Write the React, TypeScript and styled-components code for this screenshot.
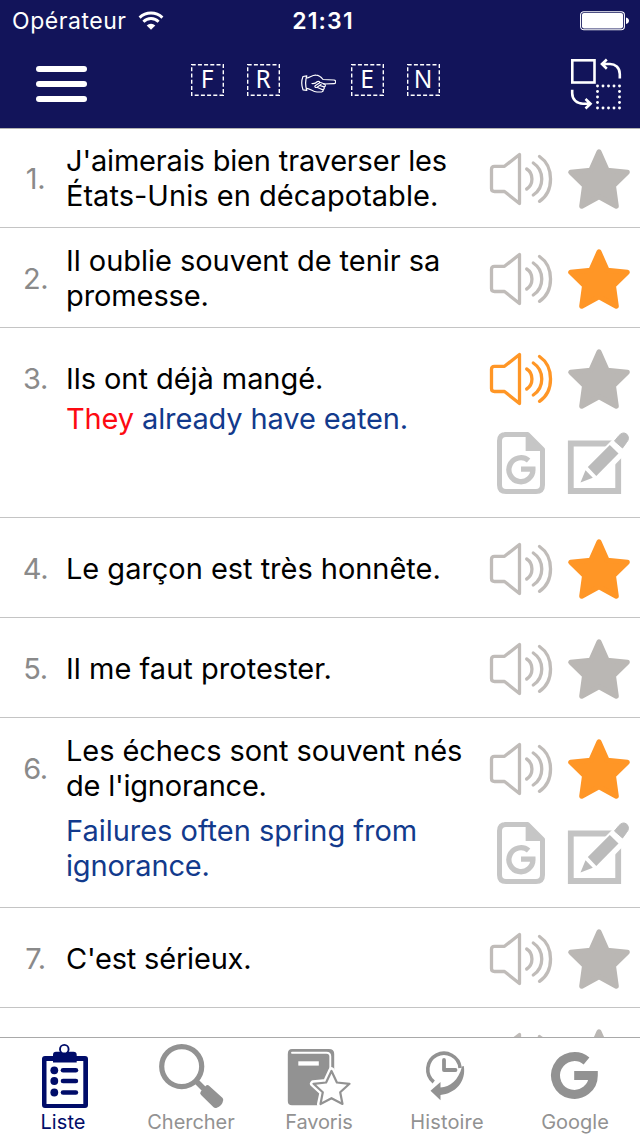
import React from "react";
import styled, { createGlobalStyle } from "styled-components";

const NAVY = "#12145a";
const ORANGE = "#ff9626";
const MUTED = "#c0bcb9";

const GlobalStyle = createGlobalStyle`
  * { box-sizing: border-box; }
  body { margin: 0; background: #fff; font-family: Inter, "Liberation Sans", sans-serif; }
  svg { display: block; flex: none; }
`;

const Screen = styled.div`
  width: 640px;
  height: 1136px;
  display: flex;
  flex-direction: column;
  overflow: hidden;
  background: #fff;
`;

const Header = styled.header`
  flex: none;
  height: 129px;
  background: ${NAVY};
  color: #fff;
  border-bottom: 1px solid #b2b2b2;
`;

const StatusBar = styled.div`
  height: 40px;
  display: grid;
  grid-template-columns: 1fr auto 1fr;
  align-items: center;
  padding: 1px 10px 0 12px;
  font-size: 23px;
  line-height: 40px;
`;

const Carrier = styled.div`
  display: flex;
  align-items: center;
  gap: 11px;
  letter-spacing: 0.55px;
`;

const Clock = styled.div`
  font-weight: 600;
  font-size: 23px;
  letter-spacing: 1.2px;
  padding-left: 4px;
`;

const StatusRight = styled.div`
  display: flex;
  justify-content: flex-end;
`;

const NavBar = styled.div`
  height: 88px;
  display: flex;
  align-items: flex-start;
  padding: 17px 18px 0 35px;
`;

const MenuButton = styled.div`
  width: 53px;
  padding: 9px 1px 0;
  display: flex;
  flex-direction: column;
  gap: 9px;
`;

const MenuBar = styled.span`
  height: 6px;
  border-radius: 3px;
  background: #fff;
`;

const Direction = styled.div`
  display: flex;
  margin: 7px auto 0 102.5px;
  gap: 23px;
`;

const Letter = styled.span`
  position: relative;
  width: 33px;
  height: 32px;
  font-family: "Noto Sans", sans-serif;
  font-size: 24.5px;
  line-height: 30px;
  text-align: center;
`;

const Dashes = styled.svg`
  position: absolute;
  inset: 0;
`;

const HandSlot = styled.span`
  width: 35px;
  margin: 0 -8px 0 -2px;
`;

const List = styled.main`
  flex: 1;
  min-height: 0;
  overflow: hidden;
  margin-top: -1px;
`;

const Row = styled.article<{ $open?: boolean }>`
  display: flex;
  height: ${(p) => (p.$open ? 190 : 100)}px;
  border-bottom: 1px solid #c4c4c4;
`;

const Index = styled.div`
  flex: none;
  width: 66px;
  padding-left: 5px;
  height: 101px;
  line-height: 101px;
  text-align: center;
  font-size: 29px;
  font-weight: 400;
  letter-spacing: -0.4px;
  color: #8a8a8a;
`;

const Body = styled.div`
  flex: 1;
  font-size: 29px;
  line-height: 35px;
  white-space: nowrap;
`;

const Phrase = styled.div<{ $lines: number }>`
  padding-top: ${(p) => (p.$lines === 2 ? 15 : 33)}px;
  color: #000;
`;

const Translation = styled.div<{ $gap: number }>`
  padding-top: ${(p) => p.$gap}px;
  color: #123a8c;
`;

const Line = styled.div<{ $track?: number }>`
  letter-spacing: ${(p) => p.$track ?? -0.06}px;
`;

const Wrong = styled.span`
  color: #fd0a12;
`;

const Actions = styled.div`
  flex: none;
  width: 154px;
  padding-top: 20px;
  display: grid;
  grid-template-columns: 78px 76px;
  grid-auto-rows: 64px;
  row-gap: 18px;
`;

const TabBar = styled.nav`
  flex: none;
  height: 99px;
  display: grid;
  grid-template-columns: repeat(5, 128px);
  border-top: 1px solid #a9a9a9;
  background: #fff;
`;

const Tab = styled.div<{ $active?: boolean }>`
  color: ${(p) => (p.$active ? "#000c69" : "#929292")};
  display: flex;
  flex-direction: column;
  align-items: center;
`;

const TabLabel = styled.span<{ $track: number; $shift: number }>`
  font-size: 20px;
  line-height: 24px;
  letter-spacing: ${(p) => p.$track}px;
  margin-left: ${(p) => p.$shift}px;
`;

const WifiIcon = () => (
  <svg width="26" height="20" viewBox="0 0 26 20" fill="none" stroke="#fff" strokeWidth="2.9">
    <path d="M1.6 6.6A16.4 16.4 0 0 1 24.4 6.6" />
    <path d="M5.4 10.7A10.8 10.8 0 0 1 20.6 10.7" />
    <path d="M13 18.8L8.7 14.4A6.1 6.1 0 0 1 17.3 14.4Z" fill="#fff" stroke="none" />
  </svg>
);

const BatteryIcon = () => (
  <svg width="50" height="20" viewBox="0 0 50 20">
    <rect x="0.6" y="0.7" width="43.8" height="18" rx="3.2" fill="none" stroke="#fff" strokeWidth="1.1" />
    <rect x="2" y="2" width="41" height="15.4" rx="1.8" fill="#fff" />
    <path d="M46 6.4c2 .6 3 1.8 3 3.3s-1 2.700-3 3.300z" fill="#fff" />
  </svg>
);

const HandIcon = () => (
  <svg width="35" height="32" viewBox="0 0 35 32" fill="none" stroke="#fff" strokeWidth="1.200" strokeLinejoin="round" strokeLinecap="round">
    <path d="M2 12.500C.6 16 .6 22 2 25.800L5.800 26.400C4.400 22 4.400 16 5.800 11.800Z" />
    <path d="M5.800 14C9 13.500 11 11 15 11.200C18 11.200 20 13 22 15.500L33 16C35.300 16.300 35.300 19.600 33 19.700L22.500 20" />
    <path d="M5.600 24.300C9 24.300 11.500 27.500 16 28L20.500 28C23 27.500 22.500 25.500 21 25.300" />
    <path d="M11 19.500C13.500 19.800 15.500 18.500 16.500 17.500C18 17 19.500 17.800 18 19.200L14.500 21.500C13 22.800 14.500 24 16 23.200L20 20.500" />
    <path d="M19.500 18.500L23.500 20C25.200 21 24.200 23.200 22.500 22.700L18.500 21.500M16.500 23.500L20.500 25.300C22.700 26.300 24.300 23.800 22.500 22.800" />
  </svg>
);

const SwapIcon = () => {
  const dots: [number, number][] = [];
  for (let i = 0; i < 5; i++) {
    for (let j = 0; j < 5; j++) {
      if (i === 0 || i === 4 || j === 0 || j === 4) dots.push([29.5 + i * 5.5, 29 + j * 5.5]);
    }
  }
  return (
    <svg width="54" height="54" viewBox="0 0 54 54" fill="none" stroke="#fff" strokeWidth="2.6">
      <rect x="4.300" y="3.300" width="22.200" height="22.200" />
      <path d="M51.800 21.500V17C51.800 10.500 47 7 42 7H33.500M38.800 2.500L34 7L38.800 11.700" />
      <path d="M4.200 32.700V36.200C4.200 42.700 9 46.700 15 46.700H22.500M17.500 42L22.500 46.700L17.500 51.500" />
      <g fill="#fff" stroke="none">
        {dots.map(([x, y]) => <circle key={`${x}-${y}`} cx={x} cy={y} r="1.450" />)}
      </g>
    </svg>
  );
};

const SpeakerIcon = ({ color = MUTED }: { color?: string }) => (
  <svg width="78" height="64" viewBox="0 0 78 64" fill="none" stroke={color} strokeWidth="3.300" strokeLinecap="round" strokeLinejoin="round">
    <path d="M8.500 18.300H18.500L33.500 6.500V55.500L18.500 43.500H8.500Q5.500 43.500 5.500 40.500V21.300Q5.500 18.300 8.500 18.300Z" />
    <path d="M40.700 21C47.700 25.500 47.700 36.500 40.700 41" />
    <path d="M47.300 15C58.600 22.500 58.600 39.500 47.300 47" />
    <path d="M53.500 8.500C68.200 18.500 68.200 43.500 53.500 53.300" />
  </svg>
);

const StarIcon = ({ color = "#bab7b4" }: { color?: string }) => (
  <svg width="76" height="64" viewBox="0 0 76 64" fill={color} stroke={color} strokeWidth="5" strokeLinejoin="round">
    <path d="M35 3.800L43.200 22.300L63.300 24.300L49.500 37.800L52.300 58.200L35 48.700L17.700 58.200L20.500 37.800L6.700 24.300L26.800 22.300Z" />
  </svg>
);

const GoogleDocIcon = () => (
  <svg width="78" height="64" viewBox="0 0 78 64" fill="none" stroke="#c6c6c6">
    <path d="M19 4.500H41.500L56.500 19.500V55Q56.500 61.500 50 61.500H20Q13.500 61.500 13.500 55V11Q13.500 4.500 20 4.500Z" strokeWidth="5" strokeLinejoin="round" />
    <path d="M39.600 4L57 21H39.600Z" fill="#c6c6c6" stroke="none" />
    <path d="M42.600 30.500A12 12 0 1 0 46.900 39.200H35" strokeWidth="5.300" />
  </svg>
);

const EditIcon = () => (
  <svg width="76" height="64" viewBox="0 0 76 64">
    <path d="M6.800 13.500H54.200V61H6.800Z" fill="none" stroke="#c3c3c3" strokeWidth="5.800" />
    <path d="M13 51L31 27L57 1L71 14L41 45Z" fill="#fff" />
    <path d="M16.500 52.500L21.500 40.200L28.800 47.800Z" fill="#bbb" />
    <path d="M23.800 37L45.800 15L54.500 23.500L32.300 46Z" fill="#bbb" />
    <path d="M50.5 11L55 5.500Q59 1.200 62.800 4.200Q66.300 8.200 62.500 12.500L58.500 18Z" fill="#bbb" stroke="#bbb" strokeLinejoin="round" />
  </svg>
);

const ListIcon = () => (
  <svg width="128" height="72" viewBox="0 0 128 72" fill="currentColor">
    <path fillRule="evenodd" d="M45 18H85Q88 18 88 21V67Q88 70 85 70H45Q42 70 42 67V21Q42 18 45 18ZM46.500 23V66H83.300V23Z" />
    <path d="M53 24.500V17Q53 13.800 56 13.800H73.500Q76.700 13.800 76.700 17V24.500Z" />
    <circle cx="64.300" cy="11.200" r="4.300" fill="#fff" stroke="currentColor" strokeWidth="1.900" />
    {[32.300, 43, 54.500].map((y) => (
      <g key={y}>
        <circle cx="54.300" cy={y} r="3.900" />
        <rect x="60.700" y={y - 2.300} width="17.500" height="4.600" rx="2.300" />
      </g>
    ))}
  </svg>
);

const SearchIcon = () => (
  <svg width="128" height="72" viewBox="0 0 128 72" fill="none" stroke="currentColor">
    <circle cx="53.700" cy="28.600" r="20" strokeWidth="5.200" />
    <path d="M67.500 42.500L76 51" strokeWidth="5.500" />
    <path d="M79.500 50L92.500 61.800Q91.800 66 87.500 67.300L75 55Z" fill="currentColor" strokeWidth="5.500" strokeLinejoin="round" />
  </svg>
);

const FavoritesIcon = () => (
  <svg width="128" height="72" viewBox="0 0 128 72">
    <path fill="currentColor" d="M36 11H73Q78.200 11 78.200 16V44L64 67.300H36Q31.800 67.300 31.800 63V16Q31.800 11 36 11Z" />
    <path d="M36 14.700H70.500Q74.300 14.700 74.300 18.500V45" fill="none" stroke="#fff" strokeWidth="1.900" strokeLinecap="round" />
    <rect x="42.300" y="23.300" width="20.500" height="4.300" fill="#fff" />
    <path
      d="M75.500 32.500L80.900 44.300L93.800 45.600L84.200 54.300L86.800 66.300L75.500 60.200L64.200 66.300L66.800 54.300L57.200 45.600L70.100 44.300Z"
      fill="#fff" stroke="#fff" strokeWidth="6.500" strokeLinejoin="round"
    />
    <path
      d="M75.500 33L80.900 44.500L93.500 45.800L84.200 54.300L86.500 66L75.500 60.200L64.500 66L66.800 54.300L57.500 45.800L70.100 44.500Z"
      fill="#fff" stroke="currentColor" strokeWidth="2.200" strokeLinejoin="round"
    />
  </svg>
);

const HistoryIcon = () => (
  <svg width="128" height="72" viewBox="0 0 128 72" fill="none" stroke="currentColor">
    <path d="M49.700 44A16.200 16.200 0 1 1 76.100 30" strokeWidth="3.600" />
    <path d="M60 22V32H71.500" strokeWidth="3.800" strokeLinecap="round" strokeLinejoin="round" />
    <path d="M79.800 28C82.500 44 71 55.500 56.500 57V62.300L46.500 52.800L56.500 44V49.500C66 49 74.500 42.500 78 28.500Z" fill="currentColor" stroke="none" />
  </svg>
);

const GoogleIcon = () => (
  <svg width="128" height="72" viewBox="0 0 128 72" fill="none" stroke="currentColor" strokeWidth="9">
    <path d="M74.500 23A18.900 18.900 0 1 0 81.300 37.500H62.200" />
  </svg>
);

type Item = {
  phrase: [string, number?][];
  starred?: boolean;
  playing?: boolean;
  translation?: React.ReactNode;
  gap?: number;
};

const ITEMS: Item[] = [
  { phrase: [["J'aimerais bien traverser les", -0.17], ["États-Unis en décapotable.", 0.03]] },
  { phrase: [["Il oublie souvent de tenir sa", -0.04], ["promesse.", -0.1]], starred: true },
  {
    phrase: [["Ils ont déjà mangé.", -0.06]],
    playing: true,
    gap: 5,
    translation: <Line $track={-0.13}><Wrong>They</Wrong> already have eaten.</Line>,
  },
  { phrase: [["Le garçon est très honnête.", -0.03]], starred: true },
  { phrase: [["Il me faut protester.", 0.02]] },
  {
    phrase: [["Les échecs sont souvent nés", -0.08], ["de l'ignorance.", -0.22]],
    starred: true,
    gap: 10,
    translation: (
      <>
        <Line $track={-0.02}>Failures often spring from</Line>
        <Line $track={-0.18}>ignorance.</Line>
      </>
    ),
  },
  { phrase: [["C'est sérieux.", -0.2]] },
  { phrase: [] },
];

const TABS = [
  { label: "Liste", Icon: ListIcon, track: 0.1, shift: -2, active: true },
  { label: "Chercher", Icon: SearchIcon, track: -0.03, shift: -2 },
  { label: "Favoris", Icon: FavoritesIcon, track: -0.15, shift: -2 },
  { label: "Histoire", Icon: HistoryIcon, track: 0.17, shift: -2 },
  { label: "Google", Icon: GoogleIcon, track: 0, shift: -2 },
];

const DashedLetter = ({ children }: { children: string }) => (
  <Letter>
    <Dashes width="33" height="32" viewBox="0 0 33 32">
      <rect x="0.700" y="0.700" width="31.600" height="30.600" fill="none" stroke="#fff" strokeWidth="1.400" strokeDasharray="4 2.200" />
    </Dashes>
    {children}
  </Letter>
);

export default function App() {
  return (
    <Screen>
      <GlobalStyle />
      <Header>
        <StatusBar>
          <Carrier>Opérateur<WifiIcon /></Carrier>
          <Clock>21:31</Clock>
          <StatusRight><BatteryIcon /></StatusRight>
        </StatusBar>
        <NavBar>
          <MenuButton><MenuBar /><MenuBar /><MenuBar /></MenuButton>
          <Direction>
            <DashedLetter>F</DashedLetter>
            <DashedLetter>R</DashedLetter>
            <HandSlot><HandIcon /></HandSlot>
            <DashedLetter>E</DashedLetter>
            <DashedLetter>N</DashedLetter>
          </Direction>
          <SwapIcon />
        </NavBar>
      </Header>
      <List>
        {ITEMS.map((item, i) => (
          <Row key={i} $open={!!item.translation}>
            <Index>{item.phrase.length > 0 && `${i + 1}.`}</Index>
            <Body>
              <Phrase $lines={item.phrase.length}>
                {item.phrase.map(([text, track]) => <Line key={text} $track={track}>{text}</Line>)}
              </Phrase>
              {item.translation && <Translation $gap={item.gap ?? 0}>{item.translation}</Translation>}
            </Body>
            <Actions>
              <SpeakerIcon color={item.playing ? ORANGE : undefined} />
              <StarIcon color={item.starred ? ORANGE : undefined} />
              {item.translation && <><GoogleDocIcon /><EditIcon /></>}
            </Actions>
          </Row>
        ))}
      </List>
      <TabBar>
        {TABS.map(({ label, Icon, track, shift, active }) => (
          <Tab key={label} $active={active}>
            <Icon />
            <TabLabel $track={track} $shift={shift}>{label}</TabLabel>
          </Tab>
        ))}
      </TabBar>
    </Screen>
  );
}
